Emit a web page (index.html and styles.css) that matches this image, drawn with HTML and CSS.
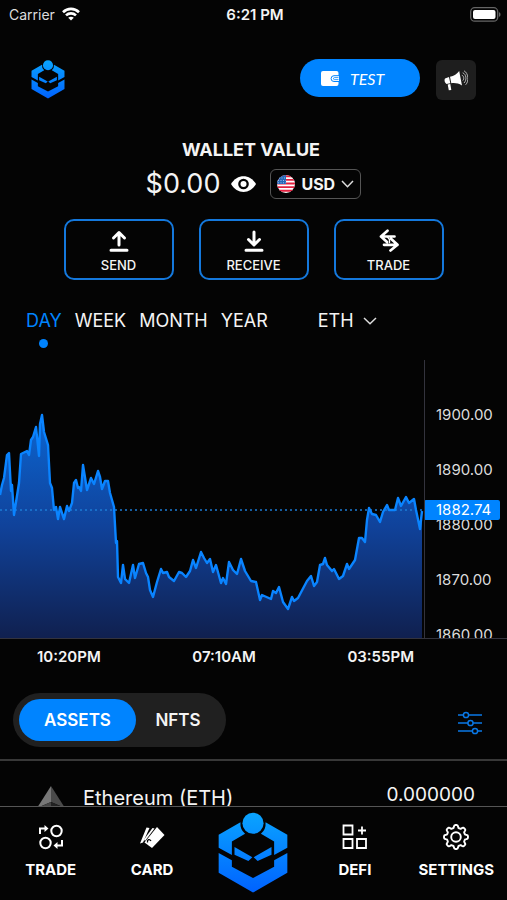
FILE: index.html
```html
<!DOCTYPE html>
<html lang="en">
<head>
    <meta charset="UTF-8">
    <meta name="viewport" content="width=device-width, initial-scale=1.0">
    <title>Wallet</title>
    <link rel="stylesheet" href="styles.css">
</head>
<body>
    <!-- shared logo -->
    <svg class="defs" width="0" height="0" aria-hidden="true">
        <defs>
            <linearGradient id="logo-fill" gradientUnits="userSpaceOnUse" x1="0" y1="20" x2="0" y2="265">
                <stop offset="0" stop-color="#0aa5ff"/>
                <stop offset="1" stop-color="#0062ff"/>
            </linearGradient>
            <symbol id="logo" viewBox="26 22 212 246">
                <g fill="url(#logo-fill)">
                    <path d="M94 52 28 90V129L68 151V110L108 87A41 41 0 0 1 94 52Z"/>
                    <path d="M170 52 236 90V129L196 151V110L156 87A41 41 0 0 0 170 52Z"/>
                    <path d="M28 145 68 167V187L132 221 196 187V167L236 145V205L132 265 28 205Z"/>
                    <path d="M76 127 130 158 118 169 76 150Z"/>
                    <path d="M188 127 134 158 146 169 188 150Z"/>
                    <circle cx="132" cy="55" r="32"/>
                </g>
            </symbol>
        </defs>
    </svg>

    <div class="status-bar">
        <span class="carrier">Carrier
            <svg width="18" height="14" viewBox="0 0 18 14" fill="none" stroke="#fff" stroke-width="2.6"><path d="M1 5.2C5.6.7 12.4.7 17 5.2M4 8.4C6.8 5.7 11.2 5.7 14 8.4"/><path d="M9 13.5 6.200 10.700C7.800 9.300 10.200 9.300 11.800 10.700Z" fill="#fff" stroke="none"/></svg>
        </span>
        <span class="clock">6:21 PM</span>
        <span class="battery">
            <svg width="31" height="15" viewBox="0 0 31 15"><rect x=".7" y=".7" width="27" height="13.5" rx="4" fill="none" stroke="#666" stroke-width="1.3"/><rect x="3" y="3" width="22.5" height="9" rx="2" fill="#fff"/><path d="M29 5.200c2 .5 2 4 0 4.500z" fill="#666"/></svg>
        </span>
    </div>

    <header class="header">
        <svg class="header-logo" width="34" height="39"><use href="#logo"/></svg>
        <button class="wallet-button">
            <svg width="18" height="15" viewBox="0 0 18 15"><rect width="17.5" height="15" rx="2" fill="#fff"/><path d="M18 4.700h-5a2.900 2.900 0 0 0 0 5.800h5" fill="#fff" stroke="#0084ff" stroke-width="1"/><path d="M17.500 6.600h-4a1 1 0 0 0 0 2h4" fill="none" stroke="#0084ff" stroke-width=".8"/></svg>
            TEST
        </button>
        <button class="news-button" aria-label="News">
            <svg width="24" height="21" viewBox="0 0 24 21"><path d="M1 8.500 5 7l1.300 6.200L2.500 14C.5 12.500 0 10 1 8.500ZM6 6.800C10 6 13 4 15.200 1L18 15.500C14.500 13.300 11 12.700 7.300 13.200ZM3.700 14.500 6.300 14 7.300 20 4.800 20.300Z" fill="#fff"/><path d="M17.800 5.200c2 .5 2.700 3.800 1 5.400M18.700 2.800c3.500 1.200 4.500 7.200 1.300 10.200M20 .8c4.500 2.200 5.200 10.500 1.600 14" fill="none" stroke="#ddd" stroke-width=".8"/></svg>
        </button>
    </header>

    <main class="content">
        <section class="balance">
            <h1>WALLET VALUE</h1>
            <div class="balance-row">
                <span class="amount">$0.00</span>
                <button class="eye-button" aria-label="Hide balance">
                    <svg width="25" height="16" viewBox="0 0 25 16"><path d="M0 8C6-2.500 19-2.500 25 8 19 18.500 6 18.500 0 8Z" fill="#fff"/><circle cx="12.500" cy="8" r="5.300" fill="#040404"/><circle cx="12.500" cy="8" r="3" fill="#fff"/></svg>
                </button>
                <label class="currency">
                    <svg width="18" height="18" viewBox="0 0 18 18">
                        <clipPath id="flag"><circle cx="9" cy="9" r="9"/></clipPath>
                        <g clip-path="url(#flag)"><rect width="18" height="18" fill="#fff"/><path d="M0 1.300h18M0 4.900h18M0 8.500h18M0 12.100h18M0 15.700h18" stroke="#e2213f" stroke-width="1.9"/><rect width="9" height="9" fill="#2467b8"/><path d="M2 3h7M1 5.500h8M1 7.800h8" stroke="#cfe0f5" stroke-width=".7" stroke-dasharray="1 1.5"/></g>
                    </svg>
                    <select aria-label="Currency"><option>USD</option></select>
                    <svg width="13" height="8" viewBox="0 0 13 8"><path d="M1 1 6.500 6.700 12 1" fill="none" stroke="#ddd" stroke-width="1.5"/></svg>
                </label>
            </div>
        </section>

        <div class="actions">
            <button>
                <svg width="20" height="22" viewBox="0 0 20 22" fill="none" stroke="#fff" stroke-width="3" stroke-linecap="round" stroke-linejoin="round"><path d="M10 15V2.500M4.500 8 10 2.500 15.500 8M2 20.300H18"/></svg>
                SEND
            </button>
            <button>
                <svg width="20" height="22" viewBox="0 0 20 22" fill="none" stroke="#fff" stroke-width="3" stroke-linecap="round" stroke-linejoin="round"><path d="M10 2V14.500M4.500 9.500 10 15 15.500 9.500M2 20.300H18"/></svg>
                RECEIVE
            </button>
            <button>
                <svg width="20" height="23" viewBox="0 0 20 23" fill="none" stroke="#fff" stroke-width="2.7" stroke-linecap="round" stroke-linejoin="round"><path d="M8.500 1.700 2 7.500H15.500M2 7.500 8 13M11.500 21.500 18.500 15.800H5M18.500 15.800 12 9.800"/><path d="M8.500 8 10.500 10.500V13.500" stroke-width="1.4"/></svg>
                TRADE
            </button>
        </div>

        <div class="periods">
            <button class="active">DAY</button>
            <button>WEEK</button>
            <button>MONTH</button>
            <button>YEAR</button>
            <label class="coin">
                <select aria-label="Coin"><option>ETH</option></select>
                <svg width="14" height="8" viewBox="0 0 14 8"><path d="M1 1 7 6.700 13 1" fill="none" stroke="#ddd" stroke-width="1.5"/></svg>
            </label>
        </div>

        <!-- price chart -->
        <div class="chart">
            <svg class="plot" viewBox="0 0 424 278" preserveAspectRatio="none">
                <defs>
                    <linearGradient id="area" gradientUnits="userSpaceOnUse" x1="0" y1="55" x2="0" y2="278">
                        <stop offset="0" stop-color="#0b66d2"/>
                        <stop offset=".5" stop-color="#10429a"/>
                        <stop offset="1" stop-color="#10204f"/>
                    </linearGradient>
                </defs>
                <path id="price-area" fill="url(#area)"/>
                <path d="M0 150H424" stroke="#1d7cd6" stroke-width="1.5" stroke-dasharray="2 3"/>
                <path id="price-line" fill="none" stroke="#0a84ff" stroke-width="2.4" stroke-linejoin="round"/>
            </svg>
            <div class="price-axis">
                <span>1900.00</span>
                <span>1890.00</span>
                <span>1880.00</span>
                <span>1870.00</span>
                <span>1860.00</span>
                <strong class="price-tag">1882.74</strong>
            </div>
        </div>
        <div class="time-axis">
            <span>10:20PM</span>
            <span>07:10AM</span>
            <span>03:55PM</span>
        </div>

        <div class="list-bar">
            <div class="toggle">
                <button class="active">ASSETS</button>
                <button>NFTS</button>
            </div>
            <button class="filter-button" aria-label="Filter">
                <svg width="24" height="24" viewBox="0 0 24 24" fill="#040404" stroke="#0a78e6" stroke-width="1.5"><path d="M0 4H24M0 12H24M0 20H24"/><circle cx="8" cy="4" r="2.6"/><circle cx="12.5" cy="12" r="2.6"/><circle cx="17" cy="20" r="2.6"/></svg>
            </button>
        </div>

        <ul class="assets">
            <li>
                <svg width="28" height="44" viewBox="0 0 28 44"><path d="M14 0 0 22 14 16Z" fill="#777"/><path d="M14 0 28 22 14 16Z" fill="#4a4a4a"/><path d="M14 16 0 22 14 30Z" fill="#444"/><path d="M14 16 28 22 14 30Z" fill="#222"/><path d="M0 25 14 44V33Z" fill="#777"/><path d="M28 25 14 44V33Z" fill="#444"/></svg>
                <span class="asset-name">Ethereum (ETH)</span>
                <span class="asset-amount">0.000000</span>
            </li>
        </ul>
    </main>

    <nav class="tab-bar">
        <a href="#">
            <svg width="26" height="26" viewBox="0 0 26 26" fill="none" stroke="#fff" stroke-width="2"><circle cx="18.5" cy="7" r="5.2"/><circle cx="7.5" cy="19" r="5.2"/><path d="M2 10V4.500H8M24 16V21.500H18"/><path d="M6.500 1 10.500 4.500 6.500 8ZM19.500 18 15.500 21.500 19.500 25Z" fill="#fff" stroke="none"/></svg>
            TRADE
        </a>
        <a href="#">
            <svg width="26" height="26" viewBox="0 0 26 26" fill="#fff"><path d="M18 3 25.500 11 13 24 5.500 18.500Z"/><path d="M7.500 3.500 10.500 4 4 18.500 1 19.500Z"/><path d="M13.500 4 15.500 4.500 6 17 5 15.500Z"/><path d="M8.500 18.500c-.5-3 2-4 3.500-1.500" fill="none" stroke="#040404" stroke-width="1.3"/></svg>
            CARD
        </a>
        <a href="#" class="home" aria-label="Home">
            <svg width="70" height="82"><use href="#logo"/></svg>
        </a>
        <a href="#">
            <svg width="26" height="26" viewBox="0 0 26 26" fill="none" stroke="#fff" stroke-width="1.8"><path d="M1.500 1.500h9v9h-9ZM1.500 15h9v9h-9ZM15 15h9v9h-9ZM20 2.500v8M16 6.500h8"/></svg>
            DEFI
        </a>
        <a href="#">
            <svg width="26" height="26" viewBox="0 0 26 26" fill="none" stroke="#fff" stroke-width="1.9" stroke-linejoin="round"><path id="gear"/><circle cx="13" cy="13" r="4.8"/></svg>
            SETTINGS
        </a>
    </nav>

    <script src="script.js"></script>
</body>
</html>
```

FILE: styles.css
```css
* {
    box-sizing: border-box;
}

body {
    margin: 0;
    height: 100vh;
    display: flex;
    flex-direction: column;
    overflow: hidden;
    background-color: #040404;
    color: #f4f4f4;
    font-family: Inter, "Open Sans", sans-serif;
}

button, select {
    margin: 0;
    padding: 0;
    border: 0;
    background: none;
    color: inherit;
    font: inherit;
    cursor: pointer;
}

select {
    appearance: none;
}

svg {
    display: block;
    flex: none;
}

.defs {
    position: absolute;
}

/* top */
.status-bar {
    display: grid;
    grid-template-columns: 1fr auto 1fr;
    align-items: center;
    height: 28px;
    padding: 0 6px 0 9px;
    font-size: 14px;
    flex: none;
}

.carrier {
    display: flex;
    align-items: center;
    gap: 7px;
    color: #ddd;
}

.clock {
    font-size: 15px;
    font-weight: 600;
}

.battery {
    justify-self: end;
}

.header {
    display: flex;
    align-items: flex-start;
    gap: 16px;
    padding: 31px 31px 0;
    flex: none;
}

.header-logo {
    margin-right: auto;
    margin-top: 1px;
}

.wallet-button {
    display: flex;
    align-items: center;
    gap: 11px;
    width: 120px;
    height: 38px;
    padding-left: 21px;
    border-radius: 19px;
    background-color: #0084ff;
    color: white;
    font-family: Lato, "Open Sans", sans-serif;
    font-size: 16px;
    font-style: italic;
}

.news-button {
    display: flex;
    align-items: center;
    justify-content: center;
    width: 40px;
    height: 40px;
    margin-top: 1px;
    border-radius: 6px;
    background-color: #1e1e1e;
}

.content {
    flex: 1;
    min-height: 0;
    overflow: hidden;
}

/* balance */
.balance {
    padding-top: 39px;
    text-align: center;
}

.balance h1 {
    margin: 0 5px 0 0;
    font-size: 18px;
    line-height: 22px;
    font-weight: 700;
}

.balance-row {
    display: flex;
    justify-content: center;
    align-items: center;
    margin-top: 8px;
}

.amount {
    font-size: 27px;
    line-height: 30px;
}

.eye-button {
    margin: 0 14px 0 11px;
}

.currency {
    display: flex;
    align-items: center;
    gap: 6px;
    height: 30px;
    padding: 0 6px;
    border: 1px solid #555;
    border-radius: 6px;
    font-size: 16px;
    font-weight: 700;
}

.actions {
    display: flex;
    justify-content: center;
    gap: 25px;
    margin-top: 20px;
}

.actions button {
    display: flex;
    flex-direction: column;
    align-items: center;
    justify-content: center;
    gap: 5px;
    width: 110px;
    height: 61px;
    padding-top: 3px;
    border: 2px solid #1478dc;
    border-radius: 10px;
    font-size: 13px;
    line-height: 16px;
    font-weight: 500;
}

/* period tabs */
.periods {
    display: flex;
    align-items: flex-start;
    gap: 13px;
    height: 80px;
    padding: 31px 26px 0;
    font-size: 18px;
    line-height: 20px;
}

.periods .active {
    color: #0084ff;
}

.periods .active::after {
    content: "";
    display: block;
    width: 9px;
    height: 9px;
    margin: 8px auto 0;
    border-radius: 50%;
    background-color: #0084ff;
}

.coin {
    display: flex;
    align-items: center;
    gap: 9px;
    margin-left: 37px;
}

/* chart */
.chart {
    display: flex;
    height: 279px;
    border-bottom: 1px solid #33333d;
}

.plot {
    flex: 1;
    min-width: 0;
    height: 278px;
}

.price-axis {
    position: relative;
    width: 83px;
    height: 278px;
    padding: 27px 0 0 11px;
    border-left: 1px solid #33333d;
    overflow: hidden;
    font-size: 15px;
    color: #ddd;
}

.price-axis span {
    display: block;
    line-height: 55px;
}

.price-tag {
    position: absolute;
    top: 140px;
    left: -1px;
    width: 76px;
    padding-left: 12px;
    border-radius: 2px;
    background-color: #0084ff;
    color: white;
    font-weight: 400;
    line-height: 20px;
}

.time-axis {
    display: flex;
    justify-content: space-between;
    padding: 8px 93px 0 37px;
    font-size: 15px;
    line-height: 20px;
    font-weight: 600;
}

/* assets */
.list-bar {
    display: flex;
    justify-content: space-between;
    align-items: center;
    padding: 26px 25px 12px 13px;
    border-bottom: 2px solid #383838;
}

.toggle {
    display: flex;
    padding: 6px;
    border-radius: 27px;
    background-color: #202020;
    font-size: 17px;
    font-weight: 600;
}

.toggle button {
    width: 84px;
    height: 42px;
    border-radius: 21px;
}

.toggle .active {
    width: 117px;
    background-color: #0084ff;
    color: white;
}

.filter-button {
    margin-top: 5px;
}

.assets {
    margin: 0;
    padding: 0;
    list-style: none;
}

.assets li {
    display: flex;
    align-items: flex-start;
    padding: 25px 32px 16px 37px;
    font-size: 20px;
    line-height: 24px;
}

.asset-name {
    margin-left: 18px;
}

.asset-amount {
    margin: -3px 0 0 auto;
    font-size: 19px;
}

/* bottom navigation */
.tab-bar {
    display: grid;
    grid-template-columns: repeat(5, 1fr);
    height: 94px;
    flex: none;
    border-top: 1px solid #555;
}

.tab-bar a {
    display: flex;
    flex-direction: column;
    align-items: center;
    gap: 10px;
    padding-top: 17px;
    color: white;
    font-size: 15px;
    line-height: 20px;
    font-weight: 700;
    text-decoration: none;
}

.tab-bar .home {
    padding-top: 5px;
}
```

FILE: script.js
```js
// price points as [x, y] in plot units
const prices = [
    [0, 135], [2, 125], [4, 118], [7, 95], [9, 93], [11, 131], [12, 125], [14, 155], [19, 123], [21, 94],
    [27, 91], [29, 95], [31, 80], [33, 77], [36, 67], [39, 96], [40, 64], [42, 55], [44, 72], [48, 85],
    [50, 123], [52, 128], [54, 150], [56, 147], [58, 159], [60, 147], [64, 159], [67, 146], [69, 151], [72, 143],
    [74, 123], [76, 120], [78, 128], [79, 127], [81, 131], [83, 105], [87, 130], [91, 118], [94, 124], [98, 111],
    [100, 117], [102, 129], [105, 121], [108, 121], [110, 133], [114, 147], [116, 183], [117, 181], [118, 217], [121, 223],
    [123, 205], [125, 219], [129, 223], [133, 205], [135, 218], [139, 204], [143, 203], [146, 213], [148, 217], [150, 230],
    [153, 237], [157, 222], [161, 209], [163, 213], [167, 212], [169, 217], [174, 221], [179, 212], [182, 213], [186, 217],
    [190, 211], [193, 200], [196, 208], [201, 192], [204, 198], [207, 203], [210, 199], [213, 212], [216, 205], [221, 223],
    [223, 218], [226, 224], [229, 202], [233, 210], [237, 214], [241, 199], [245, 211], [251, 221], [256, 222], [260, 240],
    [262, 235], [271, 239], [273, 231], [276, 233], [279, 227], [283, 242], [288, 249], [292, 237], [294, 241], [298, 238],
    [307, 221], [311, 216], [314, 226], [317, 222], [320, 205], [323, 204], [325, 198], [327, 205], [332, 211], [334, 209],
    [339, 219], [343, 216], [347, 204], [349, 209], [355, 200], [359, 178], [362, 178], [365, 182], [367, 160], [369, 148],
    [372, 154], [376, 155], [380, 162], [383, 152], [387, 145], [389, 150], [395, 150], [398, 138], [401, 146], [406, 137],
    [409, 143], [414, 139], [416, 150], [420, 169], [422, 151]
];

const line = 'M' + prices.map(p => p.join(' ')).join('L');
document.getElementById('price-line').setAttribute('d', line);
document.getElementById('price-area').setAttribute('d', line + 'V278H0Z');

// settings gear: eight rounded teeth
const gear = [];
for (let i = 0; i < 96; i++) {
    const a = i / 96 * Math.PI * 2;
    const r = 10.6 + 1.4 * Math.tanh(2.5 * Math.cos(8 * a));
    gear.push((13 + r * Math.cos(a)).toFixed(2) + ' ' + (13 + r * Math.sin(a)).toFixed(2));
}
document.getElementById('gear').setAttribute('d', 'M' + gear.join('L') + 'Z');
```
